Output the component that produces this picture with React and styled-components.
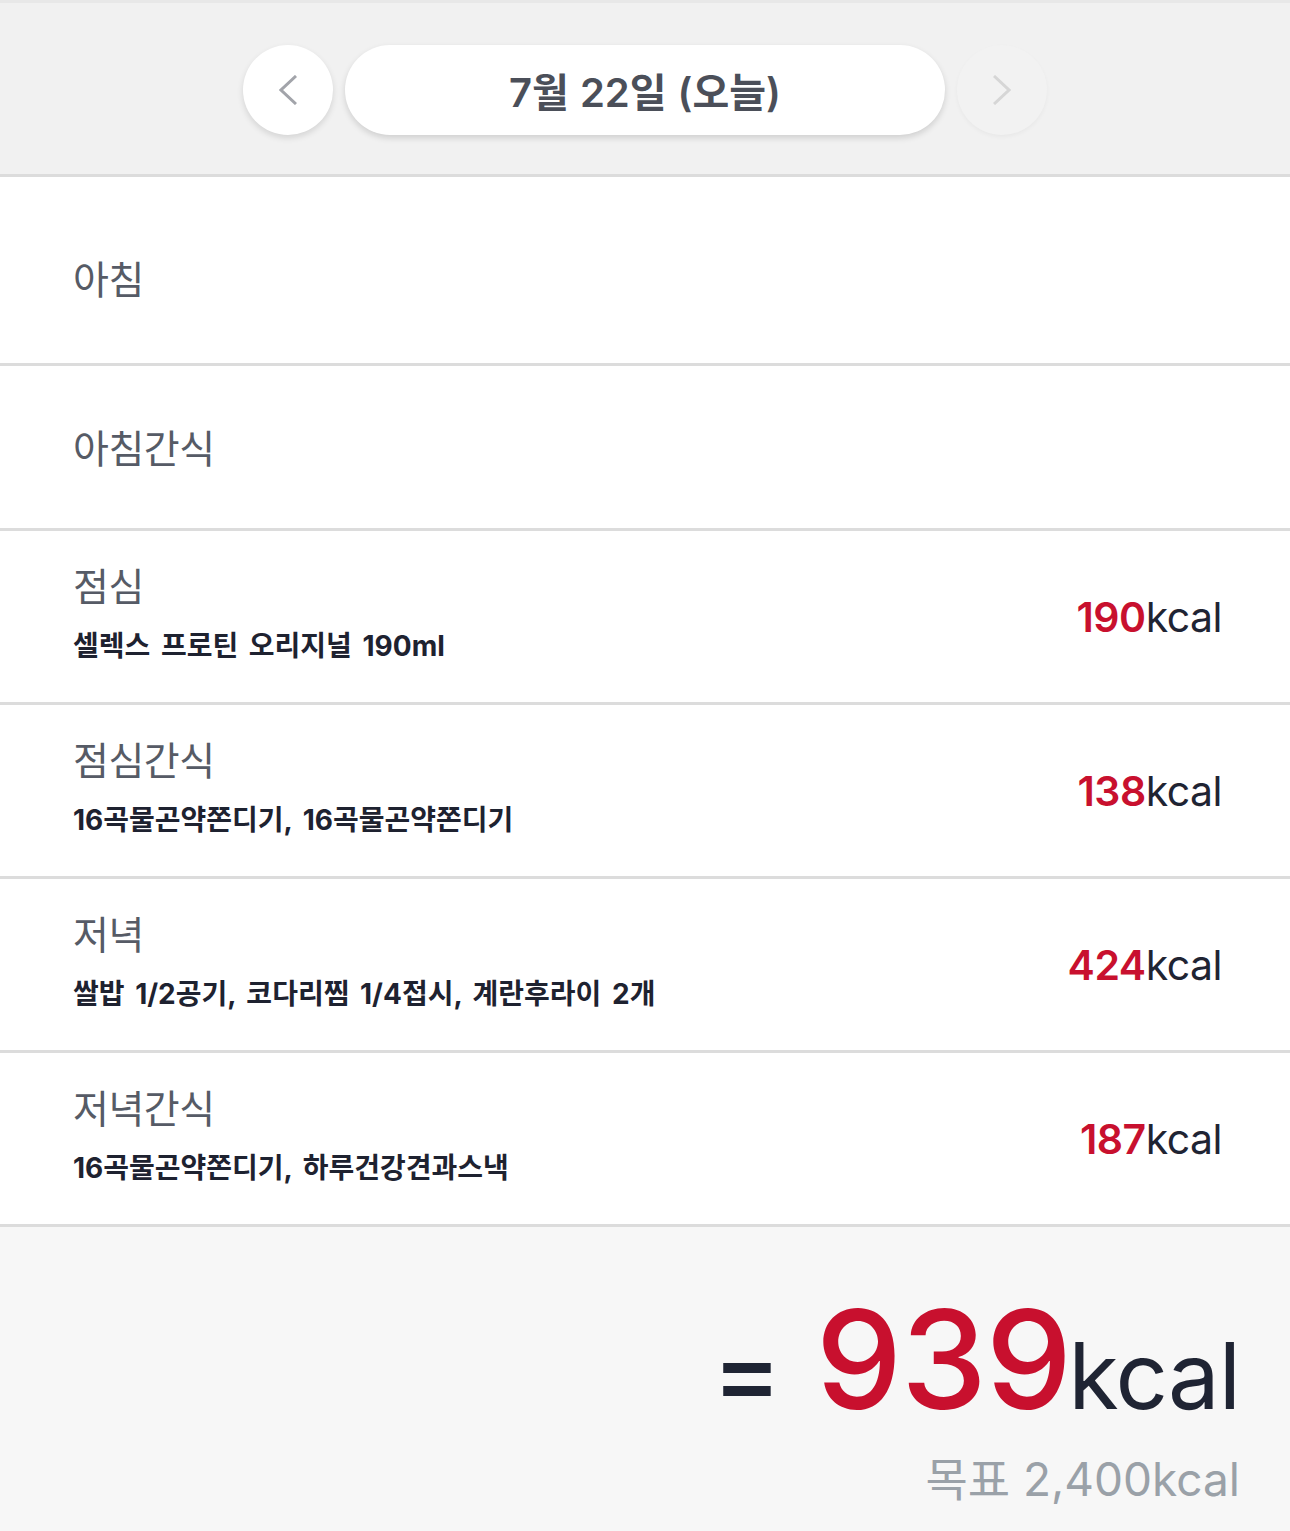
import styled, { createGlobalStyle } from "styled-components";

const meals = [
  { name: "아침", extra: 16, height: 186 },
  { name: "아침간식", height: 162 },
  { name: "점심", foods: "셀렉스 프로틴 오리지널 190ml", kcal: 190 },
  { name: "점심간식", foods: "16곡물곤약쫀디기, 16곡물곤약쫀디기", kcal: 138 },
  { name: "저녁", foods: "쌀밥 1/2공기, 코다리찜 1/4접시, 계란후라이 2개", kcal: 424 },
  { name: "저녁간식", foods: "16곡물곤약쫀디기, 하루건강견과스낵", kcal: 187 },
];

const GlobalStyle = createGlobalStyle`
  body {
    margin: 0;
    background: #f7f7f7;
    font-family: Inter, "Noto Sans CJK KR", sans-serif;
  }
`;

const Page = styled.div`
  width: 1290px;
  min-height: 1531px;
  background: #f7f7f7;
`;

const Header = styled.header`
  height: 168px;
  padding-top: 3px;
  background: #f1f1f1;
  border-top: 3px solid #e8e8e8;
  border-bottom: 3px solid #dcdcdc;
  display: flex;
  align-items: center;
  justify-content: center;
  gap: 12px;
`;

const RoundButton = styled.button`
  width: 90px;
  height: 90px;
  border-radius: 50%;
  border: none;
  padding: 0;
  display: flex;
  align-items: center;
  justify-content: center;
  background: ${(p) => (p.disabled ? "#f2f2f2" : "#ffffff")};
  box-shadow: ${(p) =>
    p.disabled ? "0 2px 4px rgba(0,0,0,0.04)" : "0 3px 6px rgba(0,0,0,0.12)"};
  color: ${(p) => (p.disabled ? "#d6d6d6" : "#a2a4aa")};
`;

const DatePill = styled.div`
  width: 600px;
  height: 90px;
  border-radius: 45px;
  background: #ffffff;
  box-shadow: 0 3px 6px rgba(0, 0, 0, 0.14);
  display: flex;
  align-items: center;
  justify-content: center;
  font-size: 40px;
  font-weight: 600;
  word-spacing: 1px;
  color: #4b4f59;
`;

const MealRow = styled.div`
  height: ${(p) => (p.h || 171) - (p.extra || 0)}px;
  padding: ${(p) => p.extra || 0}px 68px 0 73px;
  background: #ffffff;
  border-bottom: 3px solid #dcdcdc;
  display: flex;
  align-items: center;
  justify-content: space-between;
`;

const MealInfo = styled.div`
  display: flex;
  flex-direction: column;
  gap: 20px;
  margin-top: ${(p) => (p.compact ? 4 : -6)}px;
`;

const MealName = styled.div`
  font-size: 39px;
  letter-spacing: -0.5px;
  color: #565b66;
  line-height: 44px;
`;

const Foods = styled.div`
  font-size: 28px;
  font-weight: 700;
  word-spacing: 4px;
  color: #1e2230;
  line-height: 34px;
`;

const Kcal = styled.div`
  font-size: 41px;
  color: #1f2433;
  letter-spacing: -0.5px;
`;

const Num = styled.span`
  color: #c8102e;
  font-weight: 600;
`;

const Summary = styled.section`
  display: flex;
  flex-direction: column;
  align-items: flex-end;
  padding: 64px 50px 0 0;
`;

const Total = styled.div`
  display: flex;
  align-items: baseline;
  color: #1f2433;
  line-height: 1;
`;

const Equals = styled.span`
  font-size: 104px;
  font-weight: 500;
  margin-right: 34px;
`;

const BigNum = styled.span`
  font-size: 137px;
  font-weight: 500;
  color: #c8102e;
  letter-spacing: -1px;
`;

const BigUnit = styled.span`
  font-size: 92px;
  letter-spacing: -1px;
  margin-left: -3px;
`;

const Goal = styled.div`
  margin-top: 15px;
  font-size: 46px;
  color: #9aa1a8;
`;

function Chevron({ dir }) {
  const d = dir === "left" ? "M17 1 L2 15 L17 29" : "M1 1 L16 15 L1 29";
  return (
    <svg width="18" height="30" viewBox="0 0 18 30">
      <path d={d} fill="none" stroke="currentColor" strokeWidth="3" />
    </svg>
  );
}

export default function App() {
  return (
    <Page>
      <GlobalStyle />
      <Header>
        <RoundButton>
          <Chevron dir="left" />
        </RoundButton>
        <DatePill>7월 22일 (오늘)</DatePill>
        <RoundButton disabled>
          <Chevron dir="right" />
        </RoundButton>
      </Header>
      {meals.map((m) => (
        <MealRow key={m.name} h={m.height} extra={m.extra}>
          <MealInfo compact={!m.foods}>
            <MealName>{m.name}</MealName>
            {m.foods && <Foods>{m.foods}</Foods>}
          </MealInfo>
          {m.kcal && (
            <Kcal>
              <Num>{m.kcal}</Num>kcal
            </Kcal>
          )}
        </MealRow>
      ))}
      <Summary>
        <Total>
          <Equals>=</Equals>
          <BigNum>939</BigNum>
          <BigUnit>kcal</BigUnit>
        </Total>
        <Goal>목표 2,400kcal</Goal>
      </Summary>
    </Page>
  );
}
